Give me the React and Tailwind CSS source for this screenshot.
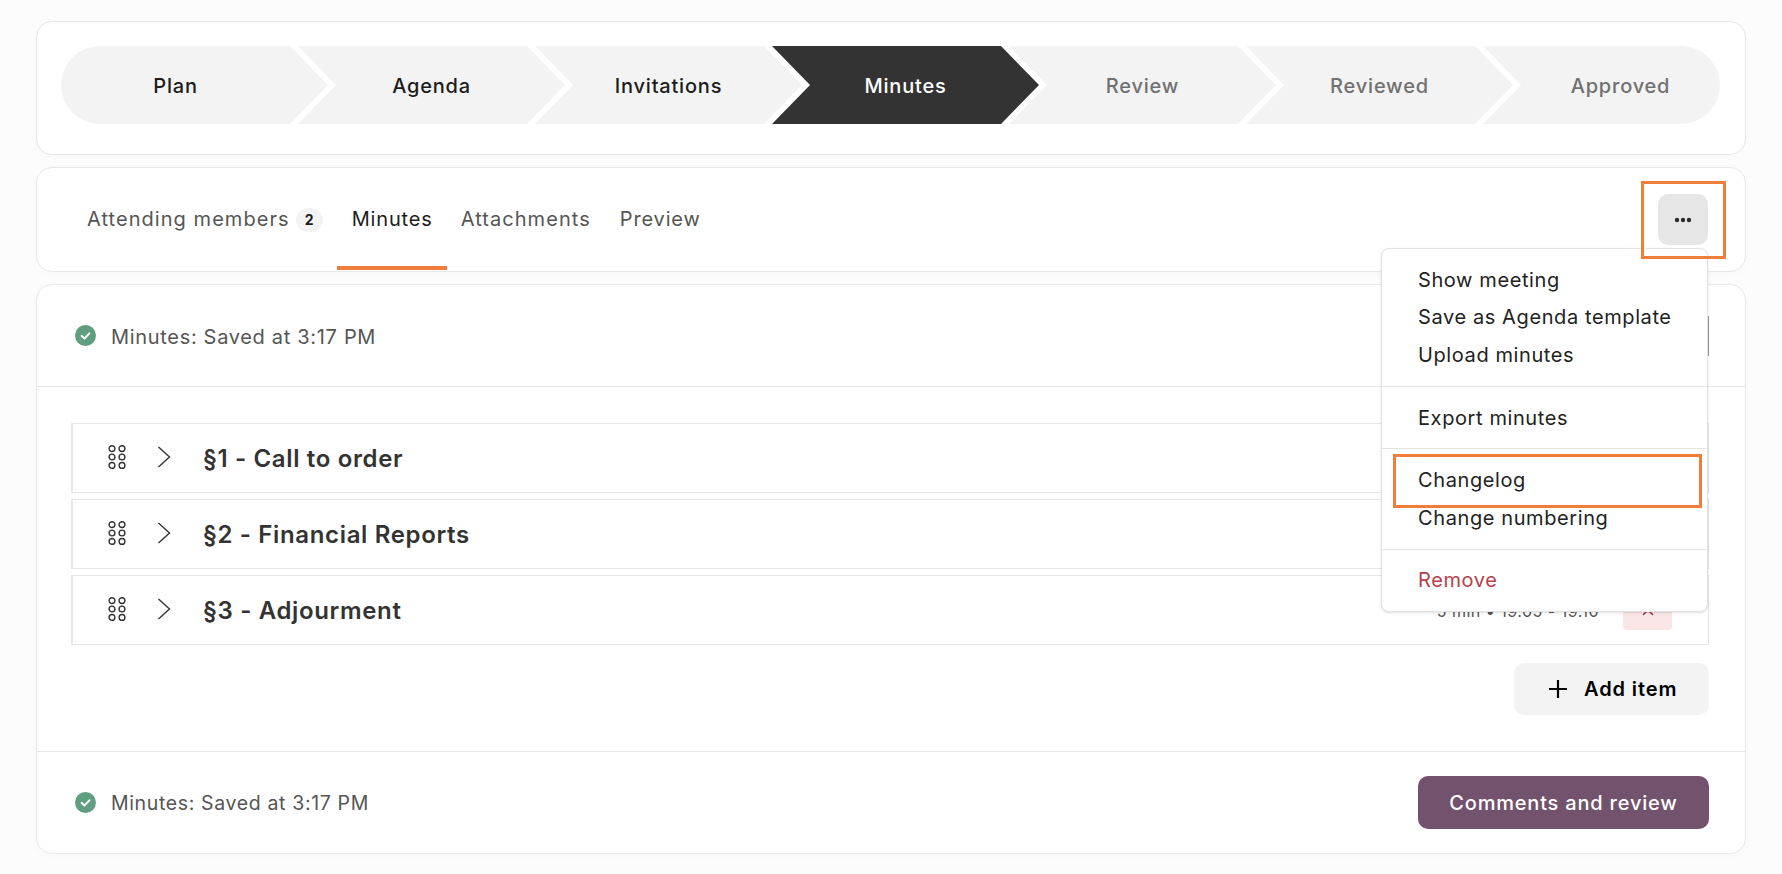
import React from 'react';
import { X } from 'lucide-react';

const FONT = 'font-["Inter","Noto_Sans",sans-serif]';

const steps = [
  { label: 'Plan', kind: 'first', state: 'done' },
  { label: 'Agenda', state: 'done' },
  { label: 'Invitations', state: 'done' },
  { label: 'Minutes', state: 'active' },
  { label: 'Review', state: 'todo' },
  { label: 'Reviewed', state: 'todo' },
  { label: 'Approved', kind: 'last', state: 'todo' },
];

const stepShape = {
  first: 'w-[267px] rounded-l-[39px] pr-[38px] [clip-path:polygon(0_0,229px_0,100%_50%,229px_100%,0_100%)]',
  middle: 'w-[267px] -ml-[30px] [clip-path:polygon(0_0,229px_0,100%_50%,229px_100%,0_100%,38px_50%)]',
  last: 'w-[237px] -ml-[30px] rounded-r-[39px] pl-[38px] [clip-path:polygon(0_0,100%_0,100%_100%,0_100%,38px_50%)]',
};

const stepColor = {
  done: 'bg-[#f3f3f3] text-[#1c1c1c]',
  active: 'bg-[#333333] text-white',
  todo: 'bg-[#f3f3f3] text-[#707070]',
};

const Stepper = () => (
  <div className="flex h-[78px]">
    {steps.map((step) => (
      <div
        key={step.label}
        className={`flex items-center justify-center pt-[2px] text-[20px] font-medium tracking-[0.8px] ${stepShape[step.kind || 'middle']} ${stepColor[step.state]}`}
      >
        {step.label}
      </div>
    ))}
  </div>
);

const SavedStatus = ({ size, textClass }) => (
  <div className={`flex items-center gap-[15px] text-[#555555] ${size}`}>
    <svg width="21" height="21" viewBox="0 0 21 21" className="shrink-0">
      <circle cx="10.5" cy="10.5" r="10.5" fill="#5f9f80" />
      <path d="M6.6 10.8l2.8 2.7 5-5.2" fill="none" stroke="#fff" strokeWidth="1.9" strokeLinecap="round" strokeLinejoin="round" />
    </svg>
    <span className={textClass}>Minutes: Saved at 3:17 PM</span>
  </div>
);

const GripIcon = () => (
  <svg width="18" height="24" viewBox="0 0 18 24" fill="none" stroke="#333" strokeWidth="1.4" className="mb-[2px]">
    {[3.6, 12, 20.4].map((cy) => (
      <g key={cy}>
        <circle cx="4" cy={cy} r="2.9" />
        <circle cx="14" cy={cy} r="2.9" />
      </g>
    ))}
  </svg>
);

const AgendaRow = ({ title }) => (
  <div className="flex h-[70px] items-center border border-l-2 border-[#e6e6e6] pl-[35px] pr-[36px]">
    <GripIcon />
    <svg width="14" height="22" viewBox="0 0 14 22" fill="none" stroke="#333" strokeWidth="1.4" className="mb-[2px] ml-[31px]">
      <path d="M1.5 1l11 10-11 10" />
    </svg>
    <h3 className="ml-[32px] pt-[2px] text-[24px] font-semibold tracking-[0.65px] text-[#333333]">{title}</h3>
    <span className="ml-auto pt-[2px] text-[16px] tracking-[0.5px] text-[#555555]">5 min • 19.05 - 19.10</span>
    <button className="ml-[24px] flex h-[40px] w-[49px] items-center justify-center rounded-[4px] bg-[#fae6e6] text-[#a8323c]">
      <X size={18} />
    </button>
  </div>
);

const MenuItem = ({ children, danger }) => (
  <div className={`flex h-[37.6px] items-center whitespace-nowrap pl-[36px] ${danger ? 'text-[#b8404a]' : 'text-[#222222]'}`}>
    {children}
  </div>
);

const MenuSection = ({ children }) => (
  <div className="border-t border-[#e3e3e3] py-[12px] first:border-t-0">{children}</div>
);

const ActionsMenu = () => (
  <div className="absolute right-[37px] top-[80px] z-10 w-[327px] rounded-[8px] border border-[#e3e3e3] bg-white text-[20px] tracking-[0.6px] shadow-sm">
    <MenuSection>
      <MenuItem>Show meeting</MenuItem>
      <MenuItem>Save as Agenda template</MenuItem>
      <MenuItem>Upload minutes</MenuItem>
    </MenuSection>
    <MenuSection>
      <MenuItem>Export minutes</MenuItem>
    </MenuSection>
    <MenuSection>
      <MenuItem>Changelog</MenuItem>
      <MenuItem>Change numbering</MenuItem>
    </MenuSection>
    <MenuSection>
      <MenuItem danger>Remove</MenuItem>
    </MenuSection>
  </div>
);

const App = () => {
  const card = 'rounded-[16px] border border-[#e8e8e8] bg-white shadow-[0_2px_8px_rgba(0,0,0,0.02)]';

  return (
    <div className={`relative h-[874px] overflow-hidden bg-[#fcfcfc] px-[36px] pt-[21px] ${FONT}`}>
      <div className="flex flex-col gap-[12px]">
        {/* Stepper */}
        <div className={`${card} h-[134px] px-[24px] pt-[24px]`}>
          <Stepper />
        </div>

        {/* Tabs */}
        <div className={`${card} relative flex h-[105px] items-center justify-between pl-[50px] pr-[37px]`}>
          <nav className="flex h-full items-center text-[20px] tracking-[0.85px] text-[#555555]">
            <span className="pb-[2px] tracking-[1.05px]">Attending members</span>
            <span className="ml-[6px] flex h-[24px] w-[27px] items-center justify-center rounded-full bg-[#f3f3f3] text-[14px] font-bold tracking-normal text-[#1c1c1c]">2</span>
            <div className="relative ml-[14px] flex h-full items-center pb-[2px] pl-[15px] pr-[14px] text-[#1c1c1c]">
              Minutes
              <div className="absolute inset-x-0 bottom-[1px] h-[4px] bg-[#f07d3a]" />
            </div>
            <span className="ml-[14px] pb-[2px] tracking-[1.05px]">Attachments</span>
            <span className="ml-[29px] pb-[2px]">Preview</span>
          </nav>
          <button className="flex h-[51px] w-[50px] items-center justify-center rounded-[10px] bg-[#e6e6e6]">
            <svg width="18" height="6" viewBox="0 0 18 6" fill="#2b2b2b">
              <circle cx="3" cy="3" r="2.2" />
              <circle cx="9" cy="3" r="2.2" />
              <circle cx="15" cy="3" r="2.2" />
            </svg>
          </button>
          <ActionsMenu />
          <div className="pointer-events-none absolute left-[1604px] top-[13px] z-20 h-[78px] w-[85px] border-[3px] border-[#f07d3a]" />
          <div className="pointer-events-none absolute left-[1356px] top-[286px] z-20 h-[54px] w-[309px] border-[3px] border-[#f07d3a]" />
        </div>

        {/* Minutes */}
        <div className={`${card} h-[570px]`}>
          <div className="flex h-[102px] items-center justify-between border-b border-[#e6e6e6] pl-[38px] pr-[36px]">
            <SavedStatus size="text-[20px] tracking-[0.68px]" textClass="pt-[2px]" />
            <div className="h-[40px] w-[20px] bg-[#9a9a9a]" />
          </div>
          <div className="flex flex-col gap-[6px] pl-[34px] pr-[36px] pt-[36px]">
            <AgendaRow title="§1 - Call to order" />
            <AgendaRow title="§2 - Financial Reports" />
            <AgendaRow title="§3 - Adjourment" />
          </div>
          <div className="flex justify-end px-[36px] pt-[18px]">
            <button className="flex h-[52px] w-[195px] items-center gap-[17px] rounded-[10px] bg-[#f3f3f3] pl-[35px] text-[20px] font-semibold tracking-[0.9px] text-black">
              <svg width="18" height="18" viewBox="0 0 18 18" fill="none" stroke="#000" strokeWidth="2.2" className="shrink-0">
                <path d="M9 0v18M0 9h18" />
              </svg>
              Add item
            </button>
          </div>
          <div className="mt-[36px] flex h-[101px] items-center justify-between border-t border-[#e6e6e6] pl-[38px] pr-[36px]">
            <SavedStatus size="text-[19.5px] tracking-[0.64px]" textClass="pt-[3px]" />
            <button className="flex h-[53px] w-[291px] items-center justify-center rounded-[10px] bg-[#72526d] pt-[2px] text-[20px] font-medium tracking-[0.8px] text-white">
              Comments and review
            </button>
          </div>
        </div>
      </div>
    </div>
  );
};

export default App;
